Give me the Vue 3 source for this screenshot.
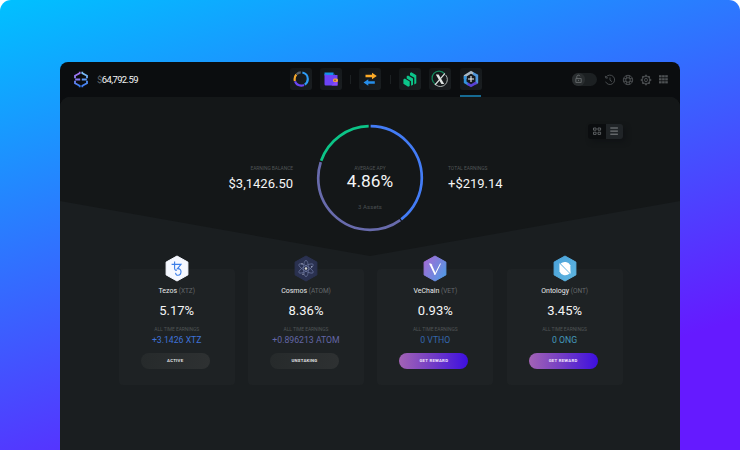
<script setup>
const segments = [
  { color: '#437cf5', start: 0.7, length: 142.3 },
  { color: '#686bac', start: 144.3, length: 143.7 },
  { color: '#0cc487', start: 289.5, length: 69 },
]

const assets = [
  { id: 'tezos', name: 'Tezos', ticker: 'XTZ', apy: '5.17%', earned: '+3.1426 XTZ', action: 'ACTIVE', reward: false },
  { id: 'cosmos', name: 'Cosmos', ticker: 'ATOM', apy: '8.36%', earned: '+0.896213 ATOM', action: 'UNSTAKING', reward: false },
  { id: 'vechain', name: 'VeChain', ticker: 'VET', apy: '0.93%', earned: '0 VTHO', action: 'GET REWARD', reward: true },
  { id: 'ontology', name: 'Ontology', ticker: 'ONT', apy: '3.45%', earned: '0 ONG', action: 'GET REWARD', reward: true },
]

const petals = [0, 60, 120]
const teeth = [0, 45, 90, 135, 180, 225, 270, 315]
const dots = [0, 1, 2, 3, 4, 5, 6, 7, 8]
</script>

<template>
  <div class="stage">
    <main class="window">
      <header class="topbar">
        <div class="brand">
          <svg class="logo" viewBox="0 0 16 17">
            <defs>
              <linearGradient id="lg-logo" gradientUnits="userSpaceOnUse" x1="1" y1="1" x2="6" y2="16">
                <stop offset="0" stop-color="#b56bf0" />
                <stop offset=".5" stop-color="#7f86f5" />
                <stop offset="1" stop-color="#2f7cf2" />
              </linearGradient>
              <linearGradient id="lg-logo2" gradientUnits="userSpaceOnUse" x1="9" y1="1" x2="9" y2="16">
                <stop offset="0" stop-color="#82c4f7" />
                <stop offset="1" stop-color="#3c78f4" />
              </linearGradient>
            </defs>
            <path d="M6.700 .8V2.200L2 4.700v2.500M2 9.800v2.500l4.700 2.500v1.400" fill="none" stroke="url(#lg-logo)" stroke-width="1.800" />
            <path d="M9.300 .8V2.200L14 4.700v2.500M14 9.800v2.500l-4.700 2.500v1.400" fill="none" stroke="url(#lg-logo2)" stroke-width="1.800" />
            <path d="M2.200 8.500h5" stroke="#8578f3" stroke-width="1.800" />
            <path d="M8.800 8.500h5" stroke="#5d97f5" stroke-width="1.800" />
          </svg>
          <span class="total"><span class="cur">$</span>64,792.59</span>
        </div>

        <nav class="nav">
          <span class="tile">
            <svg viewBox="0 0 22 22" fill="none" stroke-width="2.200">
              <circle cx="11.200" cy="11" r="6.600" stroke="#2d9bf5" pathLength="100" stroke-dasharray="38 62" stroke-dashoffset="22" />
              <circle cx="11.200" cy="11" r="6.600" stroke="#6b45f5" pathLength="100" stroke-dasharray="26 74" stroke-dashoffset="-18" />
              <circle cx="11.200" cy="11" r="6.600" stroke="#f5a72c" pathLength="100" stroke-dasharray="17 83" stroke-dashoffset="-45" />
              <circle cx="11.200" cy="11" r="6.600" stroke="#59626b" pathLength="100" stroke-dasharray="11 89" stroke-dashoffset="-63" />
            </svg>
          </span>
          <span class="tile">
            <svg viewBox="0 0 22 22">
              <path d="M4.500 4.600h9v3h-9z" fill="#1591e8" />
              <path d="M4.500 6l2 1h11v10.500H5.700A1.200 1.200 0 0 1 4.500 16.300z" fill="#6c43f6" />
              <path d="M13.500 4.600l1.500 2.400h-1.500z" fill="#1760a4" />
              <path d="M11.500 17.500l6-6v6z" fill="#8a48f7" />
              <rect x="13" y="10.500" width="5" height="3.600" rx="1.500" fill="#f0a23c" />
              <circle cx="15" cy="12.300" r=".9" fill="#8d4d42" />
            </svg>
          </span>
          <i class="sep"></i>
          <span class="tile">
            <svg viewBox="0 0 22 22">
              <path d="M6.500 6.800h6.500V4.700l4.800 3.300-4.800 3.300V9.200H6.500z" fill="#fdab27" />
              <path d="M15.800 13.200H9.300v-2L4.500 14.500l4.800 3.300v-2h6.500z" fill="#268eea" />
            </svg>
          </span>
          <i class="sep"></i>
          <span class="tile">
            <svg viewBox="0 0 22 22" fill="#0bc589">
              <path d="M4.400 11.400l1.300-.8 5 3v4.300l-1.500.8-4.800-2.900z" />
              <path d="M7.700 8.200l1.300-.7 5 3v6.200l-1.900 1v-4.400l-4.400-2.700z" />
              <path d="M11 5l1.400-.7 4.900 2.900v8.100l-2 1.100V9.800L11 7.200z" />
            </svg>
          </span>
          <span class="tile">
            <svg viewBox="0 0 22 22" fill="none">
              <path d="M15.500 5.700A7 7 0 1 0 6.300 16" stroke="#13885d" stroke-width="1.300" />
              <path d="M16.700 7A7 7 0 0 1 7 17" stroke="#aeb4b3" stroke-width="1" />
              <path d="M6.800 6.400h2.800l5.600 9.500h-2.800z" fill="#e0e5e4" />
              <path d="M15.900 5.500l-4.400 5.200M10.300 12l-4.400 5" stroke="#d5dddb" stroke-width="1.200" />
            </svg>
          </span>
          <span class="tile active">
            <svg viewBox="0 0 22 22">
              <path d="M11 2.700l7.200 4.100v8.300L11 19.300l-7.200-4.200V6.800z" fill="#15191d" />
              <path d="M3.800 7.200L11 2.700l2.500 1.500v2.900L11 5.700 6.500 8.400V11H3.800z" fill="#aab9c4" />
              <path d="M13 3.900l5.200 2.900v8.400l-2.700 1.500V8.400L13 6.900z" fill="#4e95d8" />
              <path d="M3.800 8v7.100l4.600 2.700v-2.900l-1.900-1.300V8z" fill="#3293dc" />
              <path d="M7.500 14.200L11 16.300l4.500-2.700 2 1.900L11 19.300l-3.500-2z" fill="#5940d4" />
              <path d="M11 8v6M8 11h6" stroke="#f1f4f5" stroke-width="1.100" />
            </svg>
          </span>
        </nav>

        <div class="tools">
          <span class="lock">
            <span class="knob">
              <svg viewBox="0 0 13 13" fill="none" stroke="#6b6f72" stroke-width=".9">
                <path d="M4 5.800h5.600v4H4zM5 5.800V3.700a1.700 1.700 0 0 1 3.300-.3M6.800 7.100v1.300" />
              </svg>
            </span>
          </span>
          <svg class="tool" viewBox="0 0 12 12">
            <path d="M2 3.200A4.700 4.700 0 1 1 1.600 7.700M1.300 1.900l.5 2.200 2.200-.3M6 3.500v2.700l2 1.500" />
          </svg>
          <svg class="tool" viewBox="0 0 12 12">
            <circle cx="6" cy="6" r="4.700" /><circle cx="6" cy="6" r="2.300" />
            <path d="M4.700 1.600v2.700M1.600 4.700h2.700M7.300 1.600v2.700M10.400 4.700H7.700M4.700 10.400V7.700M1.600 7.300h2.700M7.300 10.400V7.700M10.400 7.300H7.700" />
          </svg>
          <svg class="tool" viewBox="0 0 12 12">
            <circle cx="6" cy="6" r="3.800" /><ellipse cx="6" cy="6" rx="1.400" ry="1.800" />
            <path v-for="t in teeth" :key="t" d="M5.200 2.200l.2-1.100h1.200l.2 1.100" :transform="`rotate(${t} 6 6)`" />
          </svg>
          <svg class="tool filled" viewBox="0 0 12 12">
            <rect v-for="d in dots" :key="d" :x="1 + (d % 3) * 3.100" :y="1.200 + Math.floor(d / 3) * 3" width="2.600" height="2.200" />
          </svg>
        </div>
      </header>

      <section class="content">
        <div class="hero">
          <div class="stat left">
            <span class="label">EARNING BALANCE</span>
            <span class="value">$3,1426.50</span>
          </div>
          <div class="donut">
            <svg class="ring" viewBox="0 0 108 108">
              <circle
                v-for="s in segments"
                :key="s.color"
                cx="54" cy="54" r="51.800"
                fill="none"
                stroke-width="2.700"
                :stroke="s.color"
                pathLength="360"
                :stroke-dasharray="`${s.length} ${360 - s.length}`"
                :stroke-dashoffset="-s.start"
                transform="rotate(-90 54 54)"
              />
            </svg>
            <div class="donut-text">
              <span class="label">AVERAGE APY</span>
              <span class="apy">4.86%</span>
              <span class="count">3 Assets</span>
            </div>
          </div>
          <div class="stat right">
            <span class="label">TOTAL EARNINGS</span>
            <span class="value">+$219.14</span>
          </div>
          <div class="switch">
            <span class="opt">
              <svg viewBox="0 0 10 10" fill="none" stroke="#6d7173" stroke-width=".8">
                <path d="M1.500 2h2.600v2.200H1.500zM6 2h2.600v2.200H6zM1.500 6.200h2.600v2.200H1.500zM6 6.200h2.600v2.200H6z" />
              </svg>
            </span>
            <span class="opt on">
              <svg viewBox="0 0 10 10" stroke="#909496" stroke-width=".9"><path d="M1.300 2h7.600M1.300 5.100h7.600M1.300 8.200h7.600" /></svg>
            </span>
          </div>
        </div>

        <div class="cards">
          <article v-for="a in assets" :key="a.id" class="card" :class="a.id">
            <svg class="hex" viewBox="0 0 24 27">
              <defs>
                <linearGradient id="lg-vet" x1="0" y1=".1" x2="1" y2=".8">
                  <stop offset="0" stop-color="#a56ad5" /><stop offset="1" stop-color="#5199e4" />
                </linearGradient>
                <linearGradient id="lg-ont" x1="0" y1="0" x2="1" y2="1">
                  <stop offset="0" stop-color="#49a1da" /><stop offset="1" stop-color="#60b6e0" />
                </linearGradient>
              </defs>
              <path class="hex-bg" d="M12 1l10.900 6.100v12.800L12 26 1.100 19.900V7.100z" />
              <g v-if="a.id === 'tezos'" fill="none" stroke="#3a7de8" stroke-width="1.100">
                <path d="M6.600 9.400h9.400l-3.500 4.200c2.200-.2 3.500 1.100 3.500 3 0 2.200-1.400 3.700-3 3.700-1.500 0-2.500-1-2.300-2.400M9.600 6.500v6.800c0 1.800 1.100 2.200 2.300 1.700" />
              </g>
              <g v-else-if="a.id === 'cosmos'">
                <ellipse v-for="p in petals" :key="p" cx="12" cy="13.500" rx="2.500" ry="8.200" fill="none" stroke="#6f7aa3" stroke-width=".65" :transform="`rotate(${p} 12 13.500)`" />
                <circle cx="12" cy="13.500" r="1.200" fill="#d9d8cf" />
                <g fill="#a5aabd"><circle cx="8" cy="8.700" r=".7" /><circle cx="17.700" cy="11.800" r=".7" /><circle cx="9" cy="19.200" r=".7" /></g>
              </g>
              <g v-else-if="a.id === 'vechain'" fill="#fff">
                <path d="M6 8.500h1.500c.6 0 .9.300 1.200.8l3.600 8.200-.6 2.500z" />
                <path d="M18 8.500l-5.700 11.500h-.7l-.6-1.300 1-.5L17 8.500z" />
              </g>
              <g v-else fill="#fff">
                <path d="M6.400 8.200l10.200 10.400A6.300 6.300 0 0 1 6.500 16.500z" />
                <path d="M7.600 8.500a6.300 6.300 0 0 1 9.700 1.800l.3 8.500z" />
                <path d="M6.500 8.200l11 11" stroke="#a6d5ec" stroke-width=".5" />
              </g>
            </svg>
            <span class="name">{{ a.name }} <em>({{ a.ticker }})</em></span>
            <span class="rate">{{ a.apy }}</span>
            <span class="label">ALL TIME EARNINGS</span>
            <span class="earned">{{ a.earned }}</span>
            <button class="btn" :class="{ reward: a.reward }">{{ a.action }}</button>
          </article>
        </div>
      </section>
    </main>
  </div>
</template>

<style>
body {
  background: #fff;
}
</style>

<style scoped>
.stage {
  box-sizing: border-box;
  width: 740px;
  height: 450px;
  padding: 62px 60px 0;
  overflow: hidden;
  border-radius: 11px 11px 0 0;
  background: linear-gradient(162deg, #00c1ff 0%, #651aff 81%);
  font-family: Roboto, "Liberation Sans", sans-serif;
  color: #f4f5f5;
}
svg {
  display: block;
}
.window {
  height: 388px;
  border-radius: 8px 8px 0 0;
  overflow: hidden;
  background: #0b0d0f;
}
.topbar {
  display: flex;
  height: 35px;
}
.brand {
  display: flex;
  align-items: center;
  width: 229.500px;
  box-sizing: border-box;
  padding-left: 12.500px;
}
.logo {
  width: 16px;
  height: 17px;
}
.total {
  margin-left: 8.500px;
  font-size: 9.500px;
  letter-spacing: -0.620px;
  white-space: nowrap;
}
.cur {
  color: #60656a;
}
.nav {
  display: flex;
  align-items: flex-start;
  padding-top: 6px;
  gap: 8.300px;
}
.tile {
  position: relative;
  width: 22px;
  height: 22px;
  border-radius: 3px;
  background: linear-gradient(135deg, #121618, #1a1e21);
}
.tile.active::after {
  content: "";
  position: absolute;
  left: 0;
  top: 27px;
  width: 21.500px;
  height: 2px;
  background: #166a92;
}
.sep {
  width: 1px;
  height: 9px;
  margin-top: 7px;
  background: #1c2022;
}
.tools {
  display: flex;
  align-items: center;
  margin-left: auto;
  padding-right: 10.500px;
  gap: 5.800px;
}
.lock {
  width: 24.500px;
  height: 12.500px;
  border-radius: 7px;
  background: #1c2022;
  margin-right: 1.500px;
}
.knob {
  display: block;
  width: 12.500px;
  height: 12.500px;
  border-radius: 50%;
  background: #292d2f;
}
.tool {
  width: 12px;
  height: 12px;
  fill: none;
  stroke: #5c6063;
  stroke-width: .75;
}
.tool.filled {
  fill: #4e5254;
  stroke: none;
}
.content {
  height: 353px;
  border-radius: 10px 10px 0 0;
  background: #1a1e20;
  overflow: hidden;
}
.hero {
  position: relative;
  display: grid;
  grid-template-columns: 233px 154px 233px;
  height: 159px;
  background: #141718;
  clip-path: polygon(0 0, 100% 0, 100% 104px, 50% 100%, 0 104px);
}
.label {
  font-size: 4.900px;
  line-height: 6px;
  color: #505456;
  white-space: nowrap;
}
.stat {
  display: flex;
  flex-direction: column;
  padding-top: 68px;
}
.stat.left {
  align-items: flex-end;
}
.stat.right {
  padding-left: 1px;
}
.stat.left .label {
  letter-spacing: -0.06px;
}
.value {
  margin-top: 4.500px;
  font-size: 13px;
  line-height: 16px;
}
.donut {
  display: grid;
  justify-content: center;
  padding-top: 27.300px;
}
.ring,
.donut-text {
  grid-area: 1 / 1;
  width: 108px;
  height: 108px;
}
.donut-text {
  display: flex;
  flex-direction: column;
  align-items: center;
  box-sizing: border-box;
  padding-top: 40.700px;
}
.apy {
  font-size: 17.300px;
  line-height: 20px;
}
.count {
  margin-top: 12px;
  font-size: 6px;
  line-height: 8px;
  letter-spacing: .1px;
  color: #4a4f52;
}
.switch {
  position: absolute;
  top: 26.500px;
  right: 57px;
  display: flex;
  border-radius: 3px;
  box-shadow: 3px 3px 5px #101315;
}
.opt {
  display: grid;
  place-items: center;
  width: 17.500px;
  height: 15.500px;
  border-radius: 3px 0 0 3px;
  background: #0b0d0f;
}
.opt.on {
  border-radius: 0 3px 3px 0;
  background: #202427;
}
.opt svg {
  width: 10px;
  height: 10px;
}
.cards {
  display: grid;
  grid-template-columns: repeat(4, 116px);
  gap: 13.300px;
  padding: 13px 0 0 58.700px;
}
.card {
  display: flex;
  flex-direction: column;
  align-items: center;
  height: 116px;
  border-radius: 4px;
  background: #1e2224;
}
.hex {
  width: 24px;
  height: 27px;
  margin-top: -14px;
}
.hex-bg {
  stroke-width: 1;
  stroke-linejoin: round;
}
.tezos .hex-bg { fill: #f5f8ff; stroke: #f5f8ff; }
.cosmos .hex-bg { fill: #2a3150; stroke: #2a3150; }
.vechain .hex-bg { fill: url(#lg-vet); stroke: url(#lg-vet); }
.ontology .hex-bg { fill: url(#lg-ont); stroke: url(#lg-ont); }
.name {
  margin-top: 4.500px;
  font-size: 7px;
  line-height: 9px;
  color: #e8eaeb;
  white-space: nowrap;
}
.name em {
  font-style: normal;
  font-size: 6.500px;
  letter-spacing: -.05px;
  color: #65696b;
}
.rate {
  margin-top: 7px;
  font-size: 13px;
  line-height: 16px;
}
.card .label {
  margin-top: 7.500px;
  letter-spacing: -.05px;
}
.earned {
  margin-top: 2.500px;
  font-size: 8.700px;
  line-height: 10px;
  white-space: nowrap;
}
.tezos .earned { color: #3f72d8; }
.cosmos .earned { color: #6366a6; }
.vechain .earned { color: #3567ad; }
.ontology .earned { color: #4399bc; }
.btn {
  width: 69px;
  height: 15.500px;
  margin: 8.500px 3px 0 0;
  padding: 0;
  border: 0;
  border-radius: 8px;
  background: linear-gradient(100deg, #262a2b, #2e3132);
  color: #e0e2e3;
  font: 700 4.300px/15.500px Roboto, sans-serif;
  letter-spacing: .25px;
}
.btn.reward {
  background: linear-gradient(90deg, #a263b5 0%, #713bc6 50%, #3d0fe0 100%);
  color: #f1e5fb;
}
</style>
